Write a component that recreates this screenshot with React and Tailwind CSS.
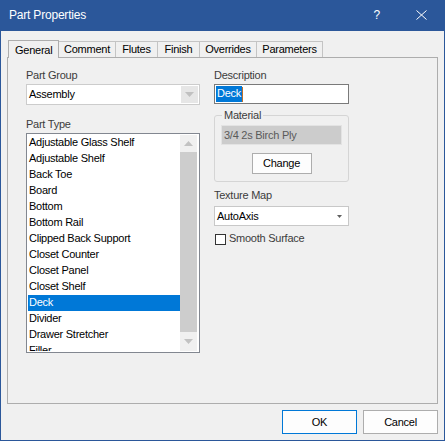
import React from 'react';

const tabs = ['General', 'Comment', 'Flutes', 'Finish', 'Overrides', 'Parameters'];
const tabWidths = ['w-[51px]', 'w-[57px]', 'w-[42px]', 'w-[42px]', 'w-[57px]', 'w-[66px]'];

const partTypes = [
  'Adjustable Glass Shelf',
  'Adjustable Shelf',
  'Back Toe',
  'Board',
  'Bottom',
  'Bottom Rail',
  'Clipped Back Support',
  'Closet Counter',
  'Closet Panel',
  'Closet Shelf',
  'Deck',
  'Divider',
  'Drawer Stretcher',
  'Filler',
];

function Arrow({ down = true, color = '#a0a0a0' }) {
  return (
    <svg width="9" height="5" viewBox="0 0 9 5">
      {down ? <path d="M0 0 L9 0 L4.5 5 Z" fill={color} /> : <path d="M0 5 L9 5 L4.5 0 Z" fill={color} />}
    </svg>
  );
}

function Label({ children, className = '' }) {
  return <div className={`h-[13px] leading-[13px] text-[#3c3c3c] ${className}`}>{children}</div>;
}

export default function App() {
  return (
    <div className="w-[445px] h-[441px] flex flex-col bg-[#f0f0f0] border border-t-0 border-[#2b579a] font-['Liberation_Sans',Arial,sans-serif] text-[11px] tracking-[-0.25px] text-black select-none">
      {/* title bar */}
      <div className="h-[31px] bg-[#2b579a] flex items-center pl-[8px] text-white -mx-px">
        <span className="text-[12px] tracking-[-0.2px] pl-[1px] pb-[2px]">Part Properties</span>
        <span className="ml-auto text-[12px] mr-[36px] pb-[2px]">?</span>
        <svg width="11" height="10" viewBox="0 0 11 10" className="mr-[18px] mb-[2px]">
          <path d="M0.5 0.5 L10.5 9.5 M10.5 0.5 L0.5 9.5" stroke="white" strokeWidth="1" />
        </svg>
      </div>

      <div className="flex-1 flex flex-col px-[6px] pt-[9px]">
        {/* tabs */}
        <div className="flex items-end h-[17px] pl-[1px]">
          {tabs.map((t, i) =>
            i === 0 ? (
              <div
                key={t}
                className={`${tabWidths[i]} h-[18px] -mb-px relative z-10 bg-[#f0f0f0] border border-b-0 border-[#adadad] pl-[6px] pt-[3px] leading-[13px]`}
              >
                {t}
              </div>
            ) : (
              <div
                key={t}
                className={`${tabWidths[i]} h-[16px] bg-[#f0f0f0] border-t border-r border-[#c4c4c4] text-center leading-[14px]`}
              >
                {t}
              </div>
            )
          )}
        </div>

        {/* panel */}
        <div className="h-[347px] border border-[#adadad] flex pl-[18px] pt-[11px]">
          {/* left column */}
          <div className="w-[174px] flex flex-col">
            <Label>Part Group</Label>
            <div className="mt-[2px] h-[21px] border border-[#cccccc] bg-white flex items-stretch">
              <div className="flex-1 pl-[2px] leading-[19px]">Assembly</div>
              <div className="w-[17px] m-[1px] bg-[#e6e6e6] flex items-center justify-center">
                <Arrow color="#c0c0c0" />
              </div>
            </div>

            <Label className="mt-[13px]">Part Type</Label>
            <div className="mt-[2px] h-[220px] border border-[#828790] bg-white flex p-[1px] overflow-hidden">
              <div className="flex-1 overflow-hidden">
                {partTypes.map((p) => (
                  <div
                    key={p}
                    className={`h-[16px] leading-[14px] pl-[1px] whitespace-nowrap ${p === 'Deck' ? 'bg-[#0078d7] text-white' : ''}`}
                  >
                    {p}
                  </div>
                ))}
              </div>
              <div className="w-[17px] mr-px bg-[#f0f0f0] flex flex-col">
                <div className="h-[17px] flex items-center justify-center">
                  <Arrow down={false} color="#c2c2c2" />
                </div>
                <div className="h-[180px] bg-[#cdcdcd]" />
                <div className="flex-1 flex items-center justify-center">
                  <Arrow color="#c2c2c2" />
                </div>
              </div>
            </div>
          </div>

          {/* right column */}
          <div className="w-[135px] ml-[14px] flex flex-col">
            <Label>Description</Label>
            <div className="mt-[2px] h-[20px] border border-[#7a7a7a] bg-white flex items-center pl-[1px]">
              <span className="bg-[#0078d7] text-white h-[16px] leading-[15px] px-[1px]">Deck</span>
              <span className="w-px h-[15px] bg-[#c0702a]" />
            </div>

            <fieldset className="mt-[5px] h-[73px] border border-[#d5d5d5] rounded-[3px] pl-[6px] pr-[6px]">
              <legend className="ml-[1px] px-[2px] h-[13px] leading-[13px] text-[#3c3c3c]">Material</legend>
              <div className="mt-[3px] h-[20px] bg-[#cccccc] border border-[#e3e3e3] leading-[18px] pl-[2px] text-[#5a5a5a]">
                3/4 2s Birch Ply
              </div>
              <div className="mt-[8px] flex justify-center">
                <button className="w-[60px] h-[21px] bg-[#fdfdfd] border border-[#adadad] leading-[19px] text-black">
                  Change
                </button>
              </div>
            </fieldset>

            <Label className="mt-[7px]">Texture Map</Label>
            <div className="mt-[4px] h-[20px] border border-[#c8c8c8] bg-white flex items-center">
              <div className="flex-1 pl-[2px] leading-[18px]">AutoAxis</div>
              <div className="w-[17px] flex items-center justify-center">
                <svg width="5" height="3" viewBox="0 0 5 3">
                  <path d="M0 0 L5 0 L2.5 3 Z" fill="#606060" />
                </svg>
              </div>
            </div>

            <div className="mt-[5px] flex items-start">
              <div className="mt-[3px] ml-[1px] w-[11px] h-[11px] border border-[#333333] bg-white" />
              <span className="ml-[3px] mt-[1px] h-[13px] leading-[13px] text-[#3c3c3c]">Smooth Surface</span>
            </div>
          </div>
        </div>

        {/* buttons */}
        <div className="mt-[6px] flex justify-end gap-[6px]">
          <button className="w-[75px] h-[24px] bg-[#fdfdfd] border border-[#0078d7] leading-[22px]">OK</button>
          <button className="w-[75px] h-[24px] bg-[#fdfdfd] border border-[#adadad] leading-[22px]">Cancel</button>
        </div>
      </div>
    </div>
  );
}
